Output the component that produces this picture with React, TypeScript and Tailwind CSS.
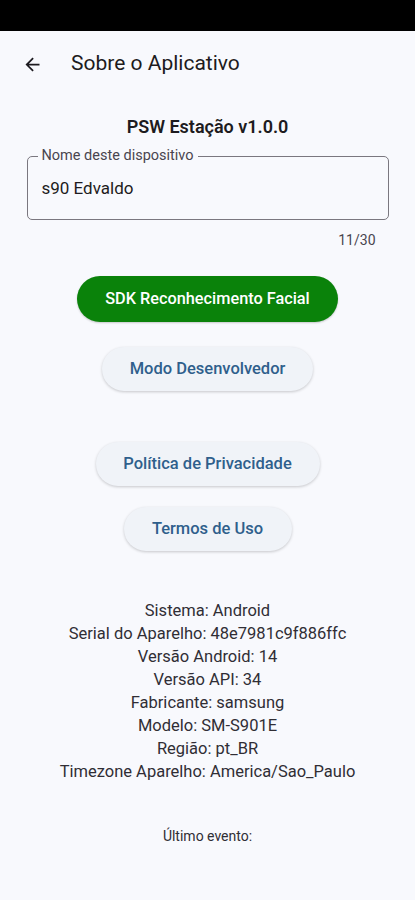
import React from "react";

const font = { fontFamily: "Roboto, 'Noto Sans', sans-serif" };

function TonalButton({ label, className }: { label: string; className: string }) {
  return (
    <button
      className={`h-[44px] rounded-full bg-[#f0f3f8] text-[#2f5f8c] text-[16.5px] font-medium shadow-[0_1px_3px_rgba(0,0,0,0.2)] ${className}`}
    >
      {label}
    </button>
  );
}

export default function App() {
  const info = [
    "Sistema: Android",
    "Serial do Aparelho: 48e7981c9f886ffc",
    "Versão Android: 14",
    "Versão API: 34",
    "Fabricante: samsung",
    "Modelo: SM-S901E",
    "Região: pt_BR",
    "Timezone Aparelho: America/Sao_Paulo",
  ];
  return (
    <div style={font} className="w-[415px] h-[900px] bg-[#f8f9fd] flex flex-col overflow-hidden">
      <div className="h-[31px] bg-black shrink-0" />
      <div className="h-[66px] flex items-center pl-[22px]">
        <svg width="21" height="21" viewBox="0 0 24 24" className="shrink-0">
          <path d="M20 11H7.83l5.59-5.59L12 4l-8 8 8 8 1.41-1.41L7.83 13H20v-2z" fill="#1d1b20" />
        </svg>
        <span className="ml-[28px] text-[21px] text-[#1d1b20]">Sobre o Aplicativo</span>
      </div>
      <div className="flex flex-col items-center">
        <div className="mt-[19px] text-[18px] font-semibold text-[#1d1b20] leading-[22px]">PSW Estação v1.0.0</div>
        <div className="relative mt-[18px] w-[362px] h-[64px] border border-[#7a777f] rounded-[5px]">
          <span className="absolute -top-[10px] left-[10px] px-[4px] bg-[#f8f9fd] text-[14.5px] leading-[18px] text-[#49454f]">
            Nome deste dispositivo
          </span>
          <div className="h-full w-full flex items-center justify-start pl-3.5">
            <span className="block text-[17px] leading-[22px] text-[#1d1b20]">s90 Edvaldo</span>
          </div>
        </div>
        <div className="w-[362px] flex justify-end pr-[13px] mt-[12px] text-[14px] leading-[16px] text-[#49454f]">11/30</div>
        <button className="mt-[28px] w-[261px] h-[46px] rounded-full bg-[#0a820a] text-white text-[16.3px] font-medium shadow-[0_1px_2px_rgba(0,0,0,0.2)]">
          SDK Reconhecimento Facial
        </button>
        <TonalButton label="Modo Desenvolvedor" className="mt-[25px] w-[211px]" />
        <TonalButton label="Política de Privacidade" className="mt-[51px] w-[224px]" />
        <TonalButton label="Termos de Uso" className="mt-[21px] w-[168px]" />
        <div className="mt-[48px] flex flex-col items-center text-[16.5px] leading-[23px] text-[#302e35]">
          {info.map((t) => (
            <div key={t}>{t}</div>
          ))}
        </div>
        <div className="mt-[45px] text-[14px] leading-[16px] text-[#302e35]">Último evento:</div>
      </div>
    </div>
  );
}
